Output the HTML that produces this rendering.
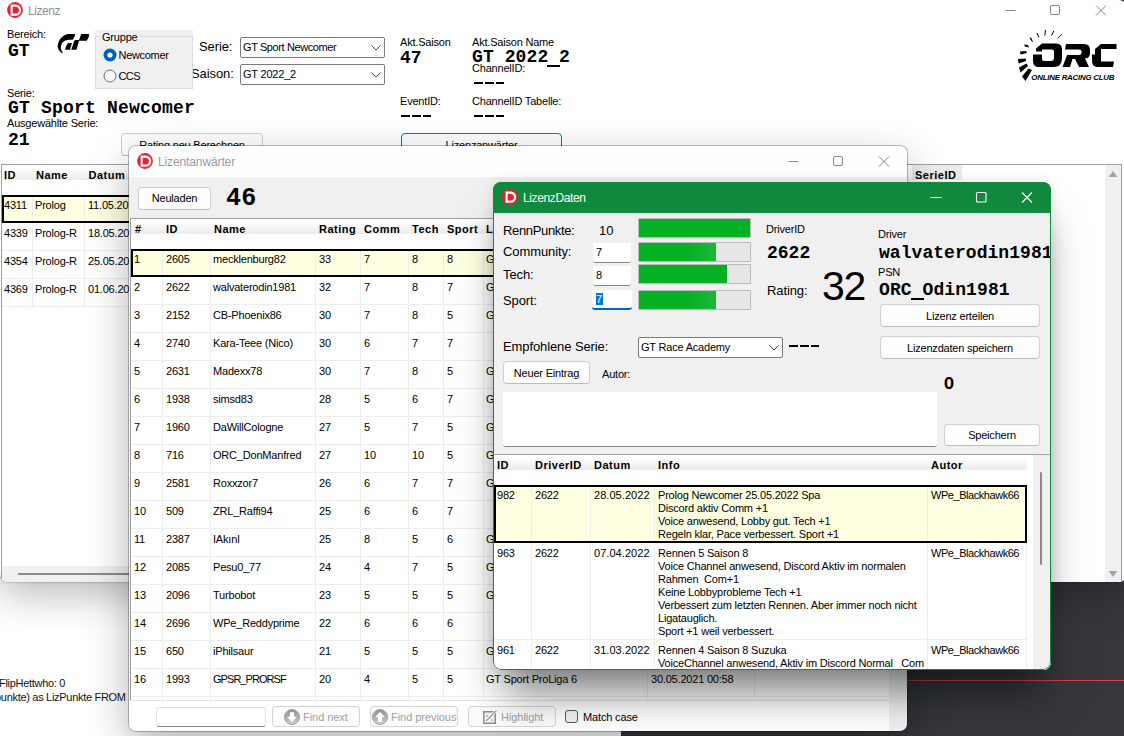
<!DOCTYPE html>
<html><head><meta charset="utf-8"><title>Lizenz</title>
<style>
*{box-sizing:border-box;margin:0;padding:0}
html,body{width:1124px;height:736px;overflow:hidden}
body{position:relative;background:#35373c;font-family:"Liberation Sans",sans-serif;font-size:11px;color:#000;letter-spacing:-0.2px}
.abs{position:absolute;white-space:nowrap}
.mono{font-family:"Liberation Mono",monospace;font-weight:bold;letter-spacing:0}
.m18{font-size:18px;line-height:18px}
.l13{font-size:13px;letter-spacing:-0.1px}
#bgw{position:absolute;left:0;top:0;width:621px;height:736px;background:#fff}
#redline{position:absolute;left:621px;top:680px;width:503px;height:1px;background:#cf4343}
.win{position:absolute;overflow:hidden;isolation:isolate}
#w1{left:0;top:0;width:1127px;height:582px;background:#fff;border-radius:0 8px 8px 8px;box-shadow:0 12px 40px rgba(0,0,0,.28),0 0 2px rgba(0,0,0,.5)}
#w2{left:129px;top:146px;width:778px;height:585px;background:#f0f0f0;border-radius:7px;box-shadow:0 16px 44px rgba(0,0,0,.30),0 0 0 1px rgba(0,0,0,.25)}
#w3{left:493px;top:182px;width:558px;height:488px;background:#f0f0f0;border-radius:8px;box-shadow:0 32px 40px -10px rgba(0,0,0,.50),0 0 14px rgba(0,0,0,.10)}
#w3::after{content:"";position:absolute;left:0;top:0;right:0;bottom:0;border:1px solid #10893e;border-radius:8px;z-index:9}
.tb{position:absolute;left:-1px;top:0;right:0}
.ticon{position:absolute;width:16px;height:16px}
.ttl{position:absolute;font-size:12px;letter-spacing:-.45px;white-space:nowrap}
.btn{font-size:11px;position:absolute;background:#fdfdfd;border:1px solid #d0d0d0;border-bottom-color:#bcbcbc;border-radius:4px;text-align:center;white-space:nowrap}
.combo{position:absolute;background:#fff;border:1px solid #7a7a7a;border-radius:2px;white-space:nowrap}
.combo svg{position:absolute;right:3px;top:7px}
.grid{position:absolute;background:#fff;overflow:hidden;isolation:isolate}
.hdr{position:absolute;left:0;top:0;height:15px;background:linear-gradient(#fff,#fafafa 40%,#ebebeb);font-weight:bold}
.hdr span{position:absolute;top:4px;white-space:nowrap;letter-spacing:.5px}
.r{position:absolute;left:0;height:28px;border-bottom:1px solid #ededed}
.r.sel{background:#ffffe1;border-bottom:none}
.r.sel::after{content:"";position:absolute;left:0;top:0;right:0;bottom:0;border:2px solid #000;z-index:3}
.c{position:absolute;top:0;height:100%;padding:4px 0 0 3px;border-left:1px solid #ededed;white-space:nowrap;overflow:hidden;line-height:13px}
#g2 .r{width:758px}
.c1{left:0;width:32px;border-left:none}
.c2{left:32px;width:48px}
.c3{left:79px;width:105px;padding-left:2px}
.c4{left:184px;width:45px}
.c5{left:229px;width:48px}
.c6{left:277px;width:34px}
.c7{left:312px;width:40px}
.c8{left:352px;width:164px;padding-left:2px}
.c9{left:516px;width:108px;border-right:1px solid #ececec}
.fb{color:#9aa0a6;font-size:11px;letter-spacing:-0.05px;text-align:left;border-color:#d4d4d4;border-radius:4px;background:#fcfcfc}
.inp{position:absolute;width:38px;height:20px;background:#fff;border-bottom:1px solid #868686;border-radius:0 0 3px 3px;padding:3px 0 0 3px;font-size:11px;line-height:13px}
.pb{position:absolute;left:144px;width:113px;height:20px;background:#e6e6e6;border:1px solid #bcbcbc}
.pb i{display:block;height:100%;background:#06b025}
#g3 .r{width:533px}
.d1{left:0;width:37px;border-left:none}
.d2{left:37px;width:60px}
.d3{left:96px;width:65px;letter-spacing:.05px}
.d4{left:160px;width:273px}
.d5{left:433px;width:100px;border-right:1px solid #ededed;letter-spacing:-.45px}

.dash{position:absolute;width:30.5px;height:2px;background:repeating-linear-gradient(90deg,#000 0,#000 8.6px,transparent 8.6px,transparent 10.9px)}
.c2{left:31px;width:49px}

.us{display:inline-block;width:10.8px;height:18px;position:relative;vertical-align:top}
.us::after{content:"";position:absolute;left:-1.2px;top:17px;width:13.2px;height:2px;background:#000}
.pb i.g{background:linear-gradient(90deg,#06b025 0,#06b025 65%,#1cb83a 96%,#10b430 100%)}

</style></head>
<body>
<div id="bgw"></div>
<div id="redline"></div>
<div class="abs" style="left:-1px;top:676px;line-height:14px;color:#111;letter-spacing:-.3px">FlipHettwho: 0<br><span style="margin-left:-4px">punkte) as LizPunkte FROM</span></div>

<div class="win" id="w1">
  <svg class="ticon" style="left:7px;top:2px" viewBox="0 0 16 16"><circle cx="8" cy="8" r="7.9" fill="#ec1f31"/><path d="M3.6 2.6H8C12 2.6 14.2 5 14.2 8.2C14.2 11.5 12 13.8 8 13.8H3.6Z M5.7 4.8V11.6H8C10.5 11.6 12 10.2 12 8.2C12 6.2 10.5 4.8 8 4.8Z" fill="#fff" fill-rule="evenodd"/></svg>
  <div class="ttl" style="left:28px;top:4px;color:#8f8f8f">Lizenz</div>
  <svg class="abs" style="left:1000px;top:0" width="120" height="22" viewBox="0 0 120 22"><g stroke="#8a8a8a" stroke-width="1" fill="none"><path d="M5.5 10.5h10"/><rect x="50.5" y="5.5" width="9" height="9" rx="1.5"/><path d="M96 5.5l10 10M106 5.5l-10 10"/></g></svg>

  <div class="abs" style="left:7px;top:28px">Bereich:</div>
  <div class="abs mono m18" style="left:8px;top:42px">GT</div>
  <!-- GT logo -->
  <svg class="abs" style="left:52px;top:28px" width="44" height="30" viewBox="0 0 44 30"><path d="M23 6 L16.3 6 C12 6.5 8 10 6.5 14.3 C5.5 17 5.5 19 6.1 20.4 C7 22.5 8.5 24 9.8 24.9 L11 24.5 C9.5 23 8.6 21.5 8.8 19.6 C8.9 18 9.2 16.8 9.8 15.5 C10.5 14.2 12 13.2 13.5 12.6 C14.8 12.1 16 11.8 17.1 11.8 L20.8 11.8 L22.6 8.6 Z M16.3 15.1 L20 15.1 L17.9 21.8 L13.1 21.8 C13.8 19 14.8 16 16.3 15.1 Z M29.2 6 L36.9 6 L36.9 8.8 L34.7 12.8 L27 12.8 L24.5 21.8 L19.2 21.8 L22.2 13 L23.2 12 L27 12 Z" fill="#000"/></svg>

  <div class="abs l13" style="left:191px;top:66px">Saison:</div>
  <!-- Gruppe group box -->
  <div class="abs" style="left:95px;top:30px;width:98px;height:59px;background:#f0f0f0"></div>
  <div class="abs" style="left:95px;top:36px;width:98px;height:53px;border:1px solid #dcdcdc"></div>
  <div class="abs" style="left:101px;top:31px;background:#f0f0f0;padding:0 1px">Gruppe</div>
  <svg class="abs" style="left:102.5px;top:48px" width="14" height="14" viewBox="0 0 14 14"><circle cx="7" cy="7" r="6.5" fill="#005fb8"/><circle cx="7" cy="7" r="2.6" fill="#fff"/></svg>
  <div class="abs" style="left:118.5px;top:49px;letter-spacing:-.3px">Newcomer</div>
  <svg class="abs" style="left:102.5px;top:69px" width="14" height="14" viewBox="0 0 14 14"><circle cx="7" cy="7" r="6" fill="#f6f6f6" stroke="#6b6b6b" stroke-width="1"/></svg>
  <div class="abs" style="left:118.5px;top:70px;letter-spacing:-.6px">CCS</div>

  <div class="abs l13" style="left:199px;top:39px">Serie:</div>
  <div class="combo" style="left:240px;top:37px;width:145px;height:21px"><span class="abs" style="left:2px;top:3px;letter-spacing:-.4px">GT Sport Newcomer</span><svg width="10" height="6" viewBox="0 0 10 6"><path d="M.5 .5l4.5 4.5l4.5-4.5" fill="none" stroke="#444" stroke-width="1"/></svg></div>
  <div class="combo" style="left:240px;top:64px;width:145px;height:21px"><span class="abs" style="left:2px;top:3px">GT 2022_2</span><svg width="10" height="6" viewBox="0 0 10 6"><path d="M.5 .5l4.5 4.5l4.5-4.5" fill="none" stroke="#444" stroke-width="1"/></svg></div>

  <div class="abs" style="left:400px;top:36px">Akt.Saison</div>
  <div class="abs mono m18" style="left:400px;top:49px">47</div>
  <div class="abs" style="left:472px;top:36px">Akt.Saison Name</div>
  <div class="abs mono m18" style="left:472px;top:48px;letter-spacing:.1px">GT 2022<span class="us"></span>2</div>
  <div class="abs" style="left:472px;top:62px">ChannelID:</div>
  <div class="dash" style="left:474px;top:82px"></div>
  <div class="abs" style="left:400px;top:95px">EventID:</div>
  <div class="dash" style="left:401px;top:115px"></div>
  <div class="abs" style="left:472px;top:95px">ChannelID Tabelle:</div>
  <div class="dash" style="left:474px;top:115px"></div>

  <div class="abs" style="left:7px;top:87px">Serie:</div>
  <div class="abs mono m18" style="left:8px;top:99px;letter-spacing:.2px">GT Sport Newcomer</div>
  <div class="abs" style="left:7px;top:117px">Ausgewählte Serie:</div>
  <div class="abs mono m18" style="left:8px;top:131px">21</div>

  <div class="btn" style="left:121px;top:133px;width:142px;height:23px;line-height:23px">Rating neu Berechnen</div>
  <div class="btn" style="left:401px;top:133px;width:161px;height:23px;line-height:23px;border-color:#0078d4">Lizenzanwärter</div>

  <!-- main grid -->
  <div class="grid" style="left:1px;top:164px;width:1121px;height:418px;border:1px solid #a0a0a0;border-bottom:none">
    <div class="hdr" style="width:130px"><span style="left:2px">ID</span><span style="left:34px">Name</span><span style="left:86.5px">Datum</span></div>
    <div class="hdr" style="left:910px;width:50px;background:#ececec"><span style="left:3px">SerieID</span></div>
    <div class="r sel" style="top:30px;width:905px"><span class="c" style="left:0;width:31px;border:none;padding-left:2px">4311</span><span class="c" style="left:30px;width:52px;padding-left:2px">Prolog</span><span class="c" style="left:82px;width:60px">11.05.2022</span></div>
    <div class="r" style="top:58px;width:905px"><span class="c" style="left:0;width:31px;border:none;padding-left:2px">4339</span><span class="c" style="left:30px;width:52px;padding-left:2px">Prolog-R</span><span class="c" style="left:82px;width:60px">18.05.2022</span></div>
    <div class="r" style="top:86px;width:905px"><span class="c" style="left:0;width:31px;border:none;padding-left:2px">4354</span><span class="c" style="left:30px;width:52px;padding-left:2px">Prolog-R</span><span class="c" style="left:82px;width:60px">25.05.2022</span></div>
    <div class="r" style="top:114px;width:905px"><span class="c" style="left:0;width:31px;border:none;padding-left:2px">4369</span><span class="c" style="left:30px;width:52px;padding-left:2px">Prolog-R</span><span class="c" style="left:82px;width:60px">01.06.2022</span></div>
    <!-- scrollbars -->
    <div class="abs" style="left:1103px;top:0;width:17px;height:418px;background:#f0f0f0"></div>
    <svg class="abs" style="left:1106px;top:6px" width="10" height="6" viewBox="0 0 10 7"><path d="M5 0l5 7H0z" fill="#a3a3a3"/></svg>
    <svg class="abs" style="left:1106px;top:406px" width="10" height="6" viewBox="0 0 10 7"><path d="M5 7l5-7H0z" fill="#a3a3a3"/></svg>
    <div class="abs" style="left:0;top:401px;width:1050px;height:17px;background:#f0f0f0"></div>
    <div class="abs" style="left:16px;top:408px;width:900px;height:2px;background:#8a8a8a"></div>
  </div>

  <!-- ORC logo placeholder -->
  <svg class="abs" style="left:1012px;top:26px" width="112" height="60" viewBox="0 0 112 60"><g fill="#000">
<path d="M24 22.5 L30 17.5 H44 Q50 17.5 50 23.5 V32 Q50 41 42 41 H27 Q21 41 21 35 V28.5 H30 V33 Q30 35 32 35 H39 Q42 35 42 32 V25.5 Q42 23.5 40 23.5 H30 V25.5 H24 Z"/>
<path d="M54 18 H72 Q78 18 78 24 V27 Q78 32 73 32.5 L77 41 H67 L63 33 H60.5 L58 41 H50.5 L55 29 H67 Q69.5 29 69.5 27 V25.5 Q69.5 23.5 67 23.5 H53 Z"/>
<path d="M89 18 H104.5 V23 H89 V35.5 H102 L101 41 H86 Q80 41 80 35 V28.5 H83 V23 Z"/>
<path d="M10 50.5 L13.5 55 L20 44 L16.5 42.5 Z M7 41.5 L8.5 46.5 L16 40 L14.5 37.5 Z M6 33 L6.5 37.5 L14 35 L13.8 32.5 Z M8 25.5 L8.5 28.5 L15 27 L14 25 Z M12 18.5 L13 20.5 L17 21.5 L16 19 Z M17.5 12 L19 11.5 L21 15.5 L20 15.8 Z"/>
<text x="19.3" y="53.8" font-family="Liberation Sans, sans-serif" font-size="7" font-weight="bold" font-style="italic" textLength="83" lengthAdjust="spacingAndGlyphs">ONLINE RACING CLUB</text></g>
<g stroke="#000" fill="none"><path d="M25 7 L26.8 11.5 M33.5 4 L32.8 9.5 M41.8 5 L39.5 9.5" stroke-width="1"/><path d="M50 8.2 L45.5 12.5" stroke-width=".8"/></g></svg>
</div>

<svg width="0" height="0" style="position:absolute"><defs><linearGradient id="gcirc" x1="0" y1="0" x2="0" y2="1"><stop offset="0" stop-color="#8f8f8f"/><stop offset="1" stop-color="#cfcfcf"/></linearGradient></defs></svg>
<div class="win" id="w2">
  <div class="tb" style="height:31px;background:#fefefe"></div>
  <svg class="ticon" style="left:8px;top:7px" viewBox="0 0 16 16"><circle cx="8" cy="8" r="7.9" fill="#ec1f31"/><path d="M3.6 2.6H8C12 2.6 14.2 5 14.2 8.2C14.2 11.5 12 13.8 8 13.8H3.6Z M5.7 4.8V11.6H8C10.5 11.6 12 10.2 12 8.2C12 6.2 10.5 4.8 8 4.8Z" fill="#fff" fill-rule="evenodd"/></svg>
  <div class="ttl" style="left:29px;top:9px;color:#9a9a9a;letter-spacing:-.12px">Lizentanwärter</div>
  <svg class="abs" style="left:654px;top:5px" width="120" height="22" viewBox="0 0 120 22"><g stroke="#8a8a8a" stroke-width="1" fill="none"><path d="M5.5 10.5h10"/><rect x="50.5" y="5.5" width="9" height="9" rx="1.5"/><path d="M96 5.5l10 10M106 5.5l-10 10"/></g></svg>

  <div class="btn" style="left:9px;top:41px;width:73px;height:23px;line-height:21px">Neuladen</div>
  <div class="abs mono" style="left:97px;top:39px;font-size:25px;line-height:28px;letter-spacing:.3px">46</div>

  <div class="grid" id="g2" style="left:1px;top:72px;width:776px;height:482px;border-top:1px solid #a0a0a0;border-left:1px solid #a0a0a0">
    <div class="hdr" style="width:760px"><span style="left:4px">#</span><span style="left:35px">ID</span><span style="left:83px">Name</span><span style="left:188px">Rating</span><span style="left:233px">Comm</span><span style="left:281px">Tech</span><span style="left:316px">Sport</span><span style="left:355px">Liga</span></div>
<div class="r sel" style="top:30px"><span class="c c1">1</span><span class="c c2">2605</span><span class="c c3">mecklenburg82</span><span class="c c4">33</span><span class="c c5">7</span><span class="c c6">8</span><span class="c c7">8</span><span class="c c8">G</span></div>
<div class="r" style="top:58px"><span class="c c1">2</span><span class="c c2">2622</span><span class="c c3">walvaterodin1981</span><span class="c c4">32</span><span class="c c5">7</span><span class="c c6">8</span><span class="c c7">7</span><span class="c c8">G</span></div>
<div class="r" style="top:86px"><span class="c c1">3</span><span class="c c2">2152</span><span class="c c3">CB-Phoenix86</span><span class="c c4">30</span><span class="c c5">7</span><span class="c c6">8</span><span class="c c7">5</span><span class="c c8">G</span></div>
<div class="r" style="top:114px"><span class="c c1">4</span><span class="c c2">2740</span><span class="c c3">Kara-Teee (Nico)</span><span class="c c4">30</span><span class="c c5">6</span><span class="c c6">7</span><span class="c c7">7</span><span class="c c8"></span></div>
<div class="r" style="top:142px"><span class="c c1">5</span><span class="c c2">2631</span><span class="c c3">Madexx78</span><span class="c c4">30</span><span class="c c5">7</span><span class="c c6">8</span><span class="c c7">5</span><span class="c c8">G</span></div>
<div class="r" style="top:170px"><span class="c c1">6</span><span class="c c2">1938</span><span class="c c3">simsd83</span><span class="c c4">28</span><span class="c c5">5</span><span class="c c6">6</span><span class="c c7">7</span><span class="c c8">G</span></div>
<div class="r" style="top:198px"><span class="c c1">7</span><span class="c c2">1960</span><span class="c c3">DaWillCologne</span><span class="c c4">27</span><span class="c c5">5</span><span class="c c6">7</span><span class="c c7">5</span><span class="c c8">G</span></div>
<div class="r" style="top:226px"><span class="c c1">8</span><span class="c c2">716</span><span class="c c3">ORC_DonManfred</span><span class="c c4">27</span><span class="c c5">10</span><span class="c c6">10</span><span class="c c7">5</span><span class="c c8">G</span></div>
<div class="r" style="top:254px"><span class="c c1">9</span><span class="c c2">2581</span><span class="c c3">Roxxzor7</span><span class="c c4">26</span><span class="c c5">6</span><span class="c c6">7</span><span class="c c7">7</span><span class="c c8">G</span></div>
<div class="r" style="top:282px"><span class="c c1">10</span><span class="c c2">509</span><span class="c c3">ZRL_Raffi94</span><span class="c c4">25</span><span class="c c5">6</span><span class="c c6">6</span><span class="c c7">7</span><span class="c c8"></span></div>
<div class="r" style="top:310px"><span class="c c1">11</span><span class="c c2">2387</span><span class="c c3">IAkınI</span><span class="c c4">25</span><span class="c c5">8</span><span class="c c6">5</span><span class="c c7">6</span><span class="c c8">G</span></div>
<div class="r" style="top:338px"><span class="c c1">12</span><span class="c c2">2085</span><span class="c c3">Pesu0_77</span><span class="c c4">24</span><span class="c c5">4</span><span class="c c6">7</span><span class="c c7">5</span><span class="c c8">G</span></div>
<div class="r" style="top:366px"><span class="c c1">13</span><span class="c c2">2096</span><span class="c c3">Turbobot</span><span class="c c4">23</span><span class="c c5">5</span><span class="c c6">5</span><span class="c c7">5</span><span class="c c8">G</span></div>
<div class="r" style="top:394px"><span class="c c1">14</span><span class="c c2">2696</span><span class="c c3">WPe_Reddyprime</span><span class="c c4">22</span><span class="c c5">6</span><span class="c c6">6</span><span class="c c7">6</span><span class="c c8"></span></div>
<div class="r" style="top:422px"><span class="c c1">15</span><span class="c c2">650</span><span class="c c3">iPhilsaur</span><span class="c c4">21</span><span class="c c5">5</span><span class="c c6">5</span><span class="c c7">5</span><span class="c c8">G</span></div>
<div class="r" style="top:450px"><span class="c c1">16</span><span class="c c2">1993</span><span class="c c3" style="letter-spacing:-.95px">GPSR_PRORSF</span><span class="c c4">20</span><span class="c c5">4</span><span class="c c6">5</span><span class="c c7">5</span><span class="c c8">GT Sport ProLiga 6</span><span class="c c9">30.05.2021 00:58</span></div>
    <div class="r" style="top:478px"><span class="c c1"></span><span class="c c2"></span><span class="c c3"></span><span class="c c4"></span><span class="c c5"></span><span class="c c6"></span><span class="c c7"></span><span class="c c8"></span><span class="c c9"></span></div>
    <div class="abs" style="left:758px;top:0;width:17px;height:482px;background:#f0f0f0"></div>
  </div>

  <!-- find bar -->
  <div class="abs" style="left:0;top:554px;width:760px;height:31px;background:#fff;border-top:1px solid #e6e6e6"></div>
  <div class="abs" style="left:27px;top:561px;width:110px;height:20px;background:#fff;border:1px solid #e2e2e2;border-bottom:1px solid #868686;border-radius:3px"></div>
  <div class="btn fb" style="left:143px;top:560px;width:88px;height:21px"><svg width="16" height="16" viewBox="0 0 14 14" style="position:absolute;left:11px;top:2px"><circle cx="7" cy="7" r="6.6" fill="url(#gcirc)" stroke="#9d9d9d" stroke-width=".8"/><path d="M5.2 2.8h3.6v4h2.4L7 11.6 2.8 6.8h2.4z" fill="#fff"/></svg><span style="position:absolute;left:30px;top:4px">Find next</span></div>
  <div class="btn fb" style="left:241px;top:560px;width:88px;height:21px"><svg width="16" height="16" viewBox="0 0 14 14" style="position:absolute;left:1px;top:2px"><circle cx="7" cy="7" r="6.6" fill="url(#gcirc)" stroke="#9d9d9d" stroke-width=".8"/><path d="M5.2 11.2h3.6v-4h2.4L7 2.4 2.8 7.2h2.4z" fill="#fff"/></svg><span style="position:absolute;left:20px;top:4px">Find previous</span></div>
  <div class="btn fb" style="left:339px;top:560px;width:88px;height:21px"><svg width="14" height="14" viewBox="0 0 14 14" style="position:absolute;left:14px;top:3px"><rect x=".75" y="1.75" width="11.5" height="11.5" fill="#f2f2f2" stroke="#8f8f8f" stroke-width="1.5"/><path d="M3 5h2v2H3zM7 5h2v2H7zM5 7h2v2H5zM3 9h2v2H3zM8 9h2v2H8z" fill="#c4c4c4"/><path d="M3.2 10.8L13.2 .8" stroke="#fff" stroke-width="2.6"/><path d="M3 11L13.4 .6" stroke="#9a9a9a" stroke-width="1.3"/></svg><span style="position:absolute;left:32px;top:4px">Highlight</span></div>
  <div class="abs" style="left:436px;top:564px;width:13px;height:13px;background:#f3f3f3;border:1px solid #5a5a5a;border-radius:3px"></div>
  <div class="abs" style="left:454px;top:565px;font-size:11px;letter-spacing:-.15px">Match case</div>
</div>

<div class="win" id="w3">
<div style="position:absolute;left:1px;top:0;width:557px;height:488px">
  <div class="tb" style="height:31px;background:#10893e"></div>
  <svg class="ticon" style="left:8px;top:7px" viewBox="0 0 16 16"><circle cx="8" cy="8" r="7.9" fill="#ec1f31"/><path d="M3.6 2.6H8C12 2.6 14.2 5 14.2 8.2C14.2 11.5 12 13.8 8 13.8H3.6Z M5.7 4.8V11.6H8C10.5 11.6 12 10.2 12 8.2C12 6.2 10.5 4.8 8 4.8Z" fill="#fff" fill-rule="evenodd"/></svg>
  <div class="ttl" style="left:29px;top:9px;color:#fff;letter-spacing:-.37px">LizenzDaten</div>
  <svg class="abs" style="left:431px;top:5px" width="120" height="22" viewBox="0 0 120 22"><g stroke="#fff" stroke-width="1.1" fill="none"><path d="M5.5 10.5h11"/><rect x="51.5" y="5.5" width="9.5" height="9.5" rx="1"/><path d="M97 5.5l10 10M107 5.5l-10 10"/></g></svg>

  <div class="abs l13" style="left:9px;top:41px;letter-spacing:-.35px">RennPunkte:</div>
  <div class="abs l13" style="left:105px;top:41px">10</div>
  <div class="abs l13" style="left:9px;top:62px">Community:</div>
  <div class="abs l13" style="left:9px;top:85px">Tech:</div>
  <div class="abs l13" style="left:9px;top:111px">Sport:</div>

  <div class="inp" style="left:99px;top:61px">7</div>
  <div class="inp" style="left:99px;top:84px">8</div>
  <div class="inp" style="left:98px;top:108px;width:40px;padding-left:4px;border-bottom:2px solid #0067c0"><span style="background:#0078d7;color:#fff;padding:0 1px 0 0">7</span></div>

  <div class="pb" style="top:36px"><i style="width:111px"></i></div>
  <div class="pb" style="top:60px"><i class="g" style="width:77px"></i></div>
  <div class="pb" style="top:82px"><i style="width:88px"></i></div>
  <div class="pb" style="top:108px"><i class="g" style="width:77px"></i></div>

  <div class="abs" style="left:272px;top:41px;font-size:11px">DriverID</div>
  <div class="abs mono m18" style="left:273px;top:62px">2622</div>
  <div class="abs l13" style="left:273px;top:101px">Rating:</div>
  <div class="abs" style="left:328px;top:81px;font-size:41px;line-height:47px;letter-spacing:-1.3px">32</div>

  <div class="abs" style="left:384px;top:46px">Driver</div>
  <div class="abs mono m18" style="left:385px;top:62px;letter-spacing:.05px">walvaterodin1981</div>
  <div class="abs" style="left:384px;top:84px">PSN</div>
  <div class="abs mono m18" style="left:385px;top:99px;letter-spacing:.1px">ORC<span class="us"></span>Odin1981</div>
  <div class="btn" style="left:386px;top:122px;width:160px;height:23px;line-height:22px">Lizenz erteilen</div>
  <div class="btn" style="left:386px;top:154px;width:160px;height:23px;line-height:22px">Lizenzdaten speichern</div>

  <div class="abs l13" style="left:9px;top:157px">Empfohlene Serie:</div>
  <div class="combo" style="left:144px;top:155px;width:145px;height:21px"><span class="abs" style="left:2px;top:3px">GT Race Academy</span><svg width="10" height="6" viewBox="0 0 10 6"><path d="M.5 .5l4.5 4.5l4.5-4.5" fill="none" stroke="#444" stroke-width="1"/></svg></div>
  <div class="dash" style="left:294.5px;top:163px"></div>

  <div class="btn" style="left:9px;top:179px;width:87px;height:23px;line-height:23px">Neuer Eintrag</div>
  <div class="abs" style="left:108px;top:186px">Autor:</div>
  <div class="abs mono m18" style="left:450px;top:193px;transform:scaleX(.92);transform-origin:0 0">O</div>
  <div class="abs" style="left:9px;top:210px;width:434px;height:55px;background:#fff;border-bottom:1px solid #868686;border-radius:0 0 3px 3px"></div>
  <div class="btn" style="left:450px;top:242px;width:96px;height:22px;line-height:20px">Speichern</div>

  <div class="grid" id="g3" style="left:0;top:272px;width:557px;height:216px;border-top:1px solid #a0a0a0">
    <div class="hdr" style="width:533px"><span style="left:3px">ID</span><span style="left:41px">DriverID</span><span style="left:100px">Datum</span><span style="left:164px">Info</span><span style="left:437px">Autor</span></div>
    <div class="r sel" style="top:30px;height:58px"><span class="c d1">982</span><span class="c d2">2622</span><span class="c d3">28.05.2022</span><span class="c d4">Prolog Newcomer 25.05.2022 Spa<br>Discord aktiv Comm +1<br>Voice anwesend, Lobby gut. Tech +1<br>Regeln klar, Pace verbessert. Sport +1</span><span class="c d5">WPe_Blackhawk66</span></div>
    <div class="r" style="top:88px;height:97px"><span class="c d1">963</span><span class="c d2">2622</span><span class="c d3">07.04.2022</span><span class="c d4">Rennen 5 Saison 8<br>Voice Channel anwesend, Discord Aktiv im normalen<br>Rahmen&nbsp; Com+1<br>Keine Lobbyprobleme Tech +1<br>Verbessert zum letzten Rennen. Aber immer noch nicht<br>Ligatauglich.<br>Sport +1 weil verbessert.</span><span class="c d5">WPe_Blackhawk66</span></div>
    <div class="r" style="top:185px;height:60px"><span class="c d1">961</span><span class="c d2">2622</span><span class="c d3">31.03.2022</span><span class="c d4">Rennen 4 Saison 8 Suzuka<br>VoiceChannel anwesend, Aktiv im Discord Normal&nbsp;&nbsp; Com</span><span class="c d5">WPe_Blackhawk66</span></div>
    <div class="abs" style="left:539px;top:0;width:18px;height:216px;background:#f0f0f0"></div>
    <div class="abs" style="left:546px;top:17px;width:2px;height:93px;background:#8a8a8a;border-radius:1px"></div>
  </div>
</div>
</div>

</body></html>
